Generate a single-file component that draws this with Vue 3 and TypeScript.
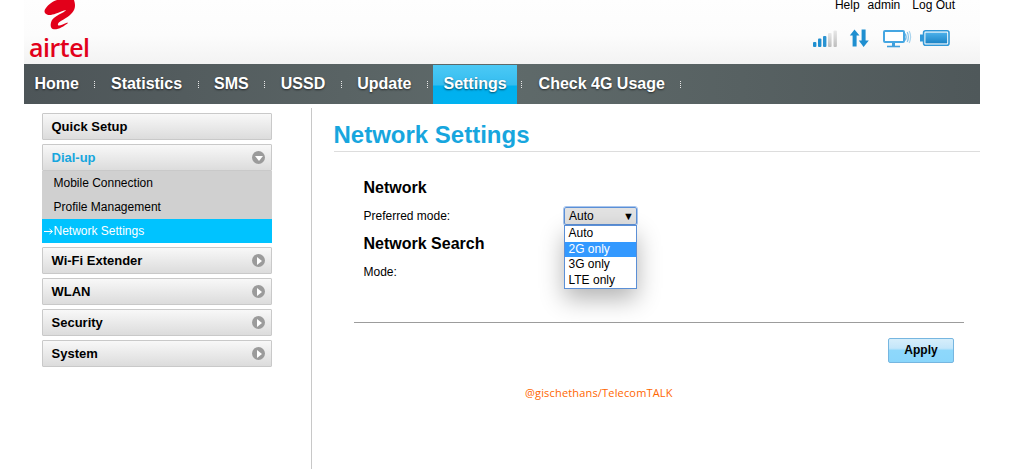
<script setup lang="ts">
const navItems = [
  { label: 'Home' },
  { label: 'Statistics' },
  { label: 'SMS' },
  { label: 'USSD' },
  { label: 'Update' },
  { label: 'Settings', active: true },
  { label: 'Check 4G Usage' },
]
const lower = ['Wi-Fi Extender', 'WLAN', 'Security', 'System']
const options = ['Auto', '2G only', '3G only', 'LTE only']
</script>

<template>
  <div class="page">
    <header class="top">
      <div class="logo">
        <svg class="swoosh" width="33" height="30" viewBox="0 0 33 30">
          <path d="M0.7 10C3 6 7 2 13 0L30 0C32 6 31 10 27 14C23 18 18 20 15.5 22C13.5 23.5 13.5 25.5 15 25.5C17 25.5 20 24 23.5 22.5L23.8 23.2C20 26 15 29.5 10 29.3C6 29 6 24 8 20C10 17 14 15 18 13C20 12 22 10.5 22 10C18 11 15 12.5 12 13.5C8 15 5 15.5 3 14.5C1 13.5 0 12 0.7 10Z" fill="#e2001a" />
        </svg>
        <span class="wordmark">airtel</span>
      </div>
      <div class="top-right">
        <nav class="links">
          <span>Help</span>
          <span>admin</span>
          <span>Log Out</span>
        </nav>
        <div class="status">
          <svg width="26" height="18" viewBox="0 0 26 18">
            <defs>
              <linearGradient id="dim" x1="0" y1="0" x2="0" y2="1">
                <stop offset="0" stop-color="#e8e8e8" />
                <stop offset="1" stop-color="#bdbdbd" />
              </linearGradient>
            </defs>
            <rect x="2" y="12" width="3.4" height="5" rx="1" fill="#1f8fd0" />
            <rect x="7" y="8.5" width="3.4" height="8.5" rx="1" fill="#1f8fd0" />
            <rect x="12" y="6" width="3.4" height="11" rx="1" fill="#2a93d2" />
            <rect x="17" y="3" width="3.6" height="14" rx="1" fill="url(#dim)" />
            <rect x="22.5" y="0.5" width="3.4" height="16.5" rx="1" fill="url(#dim)" />
          </svg>
          <svg width="22" height="19" viewBox="0 0 22 19">
            <path d="M5.5 0.5L10.5 6.5H7.6V17.5H3.6V6.5H0.8Z" fill="#1f8fd0" />
            <path d="M12.6 0.5H16.6V11.5H19.8L14.6 18L9.8 11.5H12.6Z" fill="#1f8fd0" />
          </svg>
          <svg width="30" height="18" viewBox="0 0 30 18">
            <rect x="2" y="1" width="20" height="11" rx="1" fill="#fff" stroke="#45a6e2" stroke-width="2" />
            <path d="M11.5 13V16" stroke="#3f9fdc" stroke-width="3" />
            <path d="M5 16.5H18" stroke="#3f9fdc" stroke-width="1.6" />
            <path d="M23.2 3.5Q25 7 23.2 10.5" fill="none" stroke="#6cb6e6" stroke-width="1.3" />
            <path d="M25.2 2Q27.6 7 25.2 12" fill="none" stroke="#8cc6ea" stroke-width="1.3" />
            <path d="M27.2 1Q30 7 27.2 13" fill="none" stroke="#a9d4ee" stroke-width="1.2" />
          </svg>
          <svg width="30" height="17" viewBox="0 0 30 17">
            <defs>
              <linearGradient id="cell" x1="0" y1="0" x2="0" y2="1">
                <stop offset="0" stop-color="#4cb0ea" />
                <stop offset="1" stop-color="#1c84c6" />
              </linearGradient>
            </defs>
            <rect x="0" y="4.5" width="3" height="7" fill="#2f97d8" />
            <rect x="3.6" y="0.8" width="25.4" height="14.4" rx="2" fill="#fff" stroke="#3098d8" stroke-width="1.6" />
            <rect x="5.4" y="2.6" width="21.8" height="10.8" fill="url(#cell)" />
          </svg>
        </div>
      </div>
    </header>

    <nav class="nav">
      <template v-for="item in navItems" :key="item.label">
        <a class="nav-item" :class="{ active: item.active }">{{ item.label }}</a>
        <span class="sep" :class="{ after: item.active }"></span>
      </template>
    </nav>

    <div class="body">
      <aside class="side">
        <div class="menu-head">Quick Setup</div>
        <div class="group">
          <div class="menu-head open">
            <span>Dial-up</span>
            <span class="disc"><i class="tri down"></i></span>
          </div>
          <div class="sub">Mobile Connection</div>
          <div class="sub">Profile Management</div>
          <div class="sub current">
            <svg class="arrow" width="10" height="7" viewBox="0 0 10 7">
              <path d="M0 3.5H8M5.5 1L8.5 3.5L5.5 6" fill="none" stroke="#fff" stroke-width="1" />
            </svg>
            <span>Network Settings</span>
          </div>
        </div>
        <div v-for="label in lower" :key="label" class="menu-head">
          <span>{{ label }}</span>
          <span class="disc"><i class="tri right"></i></span>
        </div>
      </aside>

      <main class="main">
        <h1 class="title">Network Settings</h1>
        <section class="form">
          <h2>Network</h2>
          <div class="row pref">
            <label>Preferred mode:</label>
            <div class="select-wrap">
              <div class="select"><span>Auto</span><span class="caret">▼</span></div>
              <ul class="dropdown">
                <li v-for="o in options" :key="o" :class="{ hi: o === '2G only' }">{{ o }}</li>
              </ul>
            </div>
          </div>
          <h2 class="second">Network Search</h2>
          <div class="row mode"><label>Mode:</label></div>
        </section>
        <div class="rule"></div>
        <div class="actions"><button class="apply">Apply</button></div>
        <p class="credit">@gischethans/TelecomTALK</p>
      </main>
    </div>
  </div>
</template>

<style>
html, body { margin: 0; background: #fff; overflow: hidden; }
</style>

<style scoped>
.page {
  width: 956px;
  height: 469px;
  margin-left: 24px;
  font-family: "Liberation Sans", Arial, sans-serif;
  color: #000;
}
.top {
  height: 64px;
  display: flex;
  justify-content: space-between;
  background: linear-gradient(#fefefe 0%, #fcfcfc 55%, #f3f3f3 100%);
}
.logo {
  width: 70px;
  padding-left: 5px;
  display: flex;
  flex-direction: column;
}
.swoosh { margin-left: 15px; display: block; flex: none; }
.wordmark {
  font-family: "Open Sans", sans-serif;
  font-weight: 600;
  font-size: 25px;
  line-height: 24px;
  letter-spacing: -0.5px;
  color: #e2001a;
  margin-top: 5px;
}
.top-right {
  display: flex;
  flex-direction: column;
  align-items: flex-end;
}
.links {
  display: flex;
  gap: 8px;
  font-size: 12px;
  line-height: 10px;
  height: 10px;
  margin-right: 25px;
}
.links span:last-child { margin-left: 4px; }
.status {
  display: flex;
  align-items: flex-start;
  margin-top: 20px;
  margin-right: 30px;
}
.status svg:nth-child(2) { margin-left: 12px; margin-top: -1px; }
.status svg:nth-child(3) { margin-left: 11px; }
.status svg:nth-child(4) { margin-left: 8px; }
.nav {
  height: 40px;
  display: flex;
  align-items: stretch;
  background: linear-gradient(90deg, #4d5558 0%, #5f6a6a 50%, #4f585a 100%);
}
.nav-item {
  padding: 0 11.5px 0 10.5px;
  font-size: 16px;
  font-weight: 700;
  line-height: 39px;
  color: #fff;
  text-shadow: 0 1px 2px rgba(0, 0, 0, 0.6);
}
.nav-item.active {
  padding: 0 10.5px;
  margin-top: 1px;
  line-height: 37px;
  background: linear-gradient(#4cc9f5 0%, #35bdf0 50%, #00b0ee 55%, #00b2f0 100%);
}
.sep {
  width: 10px;
  flex: none;
  position: relative;
}
.sep::before {
  content: "";
  position: absolute;
  left: 4px;
  top: 17px;
  width: 1px;
  height: 7px;
  background: repeating-linear-gradient(#e8e8e8 0 1px, transparent 1px 2px);
}
.sep.after { width: 11px; }
.body {
  display: flex;
  height: 365px;
}
.side {
  width: 230px;
  margin: 9px 0 0 18px;
  display: flex;
  flex-direction: column;
  gap: 4px;
}
.menu-head {
  box-sizing: border-box;
  height: 27px;
  padding: 0 6px 0 8.5px;
  display: flex;
  align-items: center;
  justify-content: space-between;
  font-size: 13px;
  font-weight: 700;
  border: 1px solid #c9c9c9;
  border-radius: 1px;
  background: linear-gradient(#f8f8f8, #dcdcdc);
}
.menu-head.open { color: #17a6de; }
.disc {
  width: 13px;
  height: 13px;
  border-radius: 50%;
  background: #9b9b9b;
  display: flex;
  align-items: center;
  justify-content: center;
}
.tri { display: block; width: 0; height: 0; }
.tri.down {
  border-left: 4.5px solid transparent;
  border-right: 4.5px solid transparent;
  border-top: 5px solid #fff;
  margin-top: 2px;
}
.tri.right {
  border-top: 4px solid transparent;
  border-bottom: 4px solid transparent;
  border-left: 5px solid #fff;
  margin-left: 2px;
}
.sub {
  height: 24px;
  line-height: 24px;
  padding-left: 11.5px;
  font-size: 12px;
  background: #d0d0d0;
}
.sub.current {
  display: flex;
  align-items: center;
  background: #00c3ff;
  color: #fff;
  padding-left: 2px;
}
.arrow {
  flex: none;
  margin-right: -0.5px;
}
.main {
  width: 669px;
  margin: 4px 0 0 39px;
  box-sizing: border-box;
  border-left: 1px solid #c8c8c8;
  padding-left: 22px;
}
.title {
  margin: 0;
  height: 26px;
  padding-top: 13px;
  padding-bottom: 4px;
  font-size: 24px;
  line-height: 28px;
  font-weight: 700;
  text-indent: -0.5px;
  color: #17a6de;
  border-bottom: 1px solid #ddd;
}
.form { padding: 27px 0 0 29.5px; }
.form h2 {
  margin: 0;
  font-size: 16px;
  line-height: 18px;
  font-weight: 700;
}
.form h2.second { margin-top: 9px; }
.row {
  display: flex;
  font-size: 12px;
  line-height: 14px;
}
.row label { width: 200.5px; }
.pref { margin-top: 12px; height: 17px; }
.mode { margin-top: 12px; }
.select-wrap { position: relative; width: 73px; }
.select {
  box-sizing: border-box;
  height: 18px;
  margin-top: -2px;
  padding: 0 2px 0 4px;
  display: flex;
  justify-content: space-between;
  align-items: center;
  background: #e2e2e2;
  border: 1px solid #5b8fd6;
  outline: 1px solid #a9c6ee;
  border-radius: 2px;
  line-height: 14px;
}
.caret { font-size: 11px; }
.dropdown {
  position: absolute;
  left: 0;
  top: 16px;
  width: 73px;
  box-sizing: border-box;
  margin: 0;
  padding: 0;
  list-style: none;
  background: #fff;
  border: 1px solid #5b8fd6;
  box-shadow: 0 10px 24px rgba(0, 0, 0, 0.3);
}
.dropdown li {
  height: 15.5px;
  line-height: 14.5px;
  padding-left: 3.5px;
}
.dropdown li.hi {
  background: #3399ff;
  color: #fff;
}
.rule {
  width: 610px;
  height: 1px;
  margin: 43px 0 0 20px;
  background: #9c9c9c;
}
.actions {
  width: 620px;
  padding-top: 15px;
  display: flex;
  justify-content: flex-end;
}
.apply {
  width: 66px;
  height: 25px;
  margin: 0;
  padding: 0 0 1px;
  font-family: "Liberation Sans", Arial, sans-serif;
  font-size: 12px;
  font-weight: 700;
  color: #000;
  border: 1px solid #76b6e0;
  border-radius: 2px;
  background: linear-gradient(#d6eefb 0%, #c4e6fa 40%, #8ed8fb 50%, #8ad6fb 100%);
}
.credit {
  margin: 23px 0 0 191px;
  font-family: "Open Sans", sans-serif;
  font-size: 11px;
  letter-spacing: 0.17px;
  line-height: 14px;
  color: #ff6600;
}
</style>
